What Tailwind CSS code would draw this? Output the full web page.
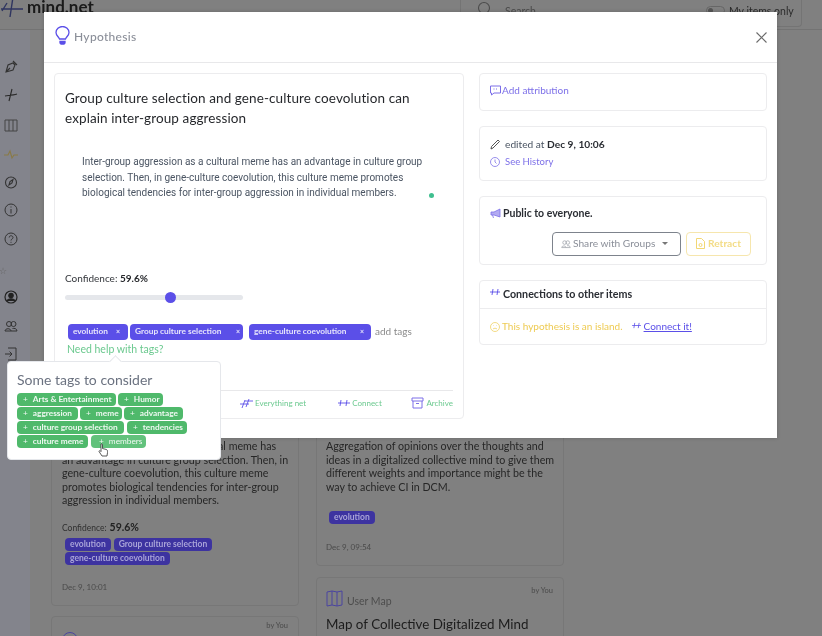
<!DOCTYPE html>
<html><head><meta charset="utf-8"><script src="https://cdn.jsdelivr.net/npm/@tailwindcss/browser@4"></script></head>
<body class="m-0">
<div class="relative w-[822px] h-[636px] overflow-hidden bg-[#808080] font-['Lato',sans-serif] text-[#1f2937] blur-[0.4px]">
  <!-- page behind -->
  <header class="h-[30px] border-b border-[#737373] flex items-start relative">
    <svg class="ml-[1px] mt-[-3px] shrink-0" width="24" height="24" viewBox="0 0 24 24" fill="none" stroke="#2f3560" stroke-width="1.4"><path d="M1 14 L6 6M0 12h22M12 0 L9 20"/></svg>
    <div class="ml-[2px] mt-[-2px] w-[64px] shrink-0 relative text-[17px] font-bold leading-[17px] text-[#1a1a1a] whitespace-nowrap">mind.net</div>
    <div class="ml-[369px] w-[342px] h-[27px] mt-0 border-r border-b border-l border-[#747474] rounded-b flex items-start pl-[16px] pt-[1px]">
      <svg class="shrink-0" width="14" height="14" viewBox="0 0 14 14" fill="none" stroke="#4b4b4b" stroke-width="1.1"><circle cx="7" cy="7" r="5.500"/></svg>
      <span class="ml-[14px] mt-[3px] text-[10.5px] text-[#4a4a4a]">Search</span>
      <span class="ml-[170px] mt-[5px] w-[19px] h-[9px] rounded-full border border-[#666] flex items-center pl-[1px]"><span class="w-[5px] h-[5px] bg-[#555] rounded-full"></span></span>
      <span class="ml-[4px] mt-[3px] text-[10.5px] whitespace-nowrap text-[#2a2a2a]">My items only</span>
    </div>
  </header>
  <div class="flex h-[606px]">
    <aside class="w-[30px] shrink-0 bg-[#83848c] relative flex flex-col items-center">
      <svg class="absolute left-[4px] top-[30px]" width="14" height="14" viewBox="0 0 14 14" fill="none" stroke="#333" stroke-width="1.1"><path d="M2 12l2-7 5-2 2 2-2 5zM2 12l4-4M9 1l4 4"/></svg>
      <svg class="absolute left-[4px] top-[58px]" width="14" height="14" viewBox="0 0 14 14" fill="none" stroke="#2a2a2a" stroke-width="1.1"><path d="M1 8c4-.5 9-1 12-2M8 1 5 13"/></svg>
      <svg class="absolute left-[4px] top-[88px]" width="14" height="14" viewBox="0 0 14 14" fill="none" stroke="#444" stroke-width="1"><path d="M1 2h12v11H1zM5 2v11M9 2v11"/></svg>
      <svg class="absolute left-[4px] top-[118px]" width="14" height="14" viewBox="0 0 14 14" fill="none" stroke="#8a7a45" stroke-width="1.1"><path d="M0 7h4l2-4 2 7 2-3h4"/></svg>
      <svg class="absolute left-[4px] top-[145px]" width="14" height="14" viewBox="0 0 14 14" fill="none" stroke="#333" stroke-width="1.1"><circle cx="7" cy="7.5" r="5.5"/><path d="M5 10l1-3.500 3-2-1 3.500z"/></svg>
      <svg class="absolute left-[4px] top-[173px]" width="14" height="14" viewBox="0 0 14 14" fill="none" stroke="#333" stroke-width="1"><circle cx="7" cy="7" r="6"/><path d="M7 6v4.500M7 3.500v1"/></svg>
      <svg class="absolute left-[4px] top-[202px]" width="14" height="14" viewBox="0 0 14 14" fill="none" stroke="#333" stroke-width="1"><circle cx="7" cy="7" r="6"/><path d="M5.200 5.500c0-2.500 3.800-2.200 3.800 0 0 1.500-2 1.500-2 3M7 9.800v1"/></svg>
      <span class="absolute left-[-1px] top-[236px] text-[9px] leading-[9px] text-[#666]">☆</span>
      <svg class="absolute left-[4px] top-[260px]" width="14" height="14" viewBox="0 0 14 14" fill="none" stroke="#222" stroke-width="1.2"><circle cx="7" cy="7" r="6"/><circle cx="7" cy="5.500" r="2.200" fill="#222"/><path d="M3 11c1-3 7-3 8 0" fill="#222"/></svg>
      <svg class="absolute left-[4px] top-[289px]" width="14" height="14" viewBox="0 0 14 14" fill="none" stroke="#333" stroke-width="1"><circle cx="5" cy="5" r="2.500"/><circle cx="9.500" cy="5" r="2.500"/><path d="M1 12c0-3 6-3 6 0zM7 12h6c0-2.500-3-3-4.500-2.500"/></svg>
      <svg class="absolute left-[4px] top-[317px]" width="14" height="14" viewBox="0 0 14 14" fill="none" stroke="#333" stroke-width="1"><path d="M4 1h8v12H4M1 7h7M5.500 4.500 8 7l-2.500 2.500"/></svg>
    </aside>
    <main class="flex-1 flex gap-[17px] pl-[21px] items-start">
      <div class="w-[248px] shrink-0 flex flex-col gap-[10px] pt-[340px]">
        <article class="h-[236px] border border-[#777] rounded bg-[#808080] pl-[10px] pr-[8px] pt-[68px] flex flex-col">
          <p class="text-[10.7px] leading-[13.5px] text-[#262626]">Inter-group aggression as a cultural meme has<br>an advantage in culture group selection. Then, in<br>gene-culture coevolution, this culture meme<br>promotes biological tendencies for inter-group<br>aggression in individual members.</p>
          <div class="mt-[13px] flex items-baseline gap-[3px] text-[8.5px] text-[#303030]">Confidence: <b class="text-[10.5px] text-[#222]">59.6%</b></div>
          <div class="mt-[3px] flex flex-wrap gap-x-[3px] gap-y-[1px] pl-[3px]">
            <span class="h-[13px] px-[5px] rounded-sm bg-[#3d33a0] text-[#a9a4d8] text-[8.5px] leading-[13px] font-bold">evolution</span>
            <span class="h-[13px] px-[5px] rounded-sm bg-[#3d33a0] text-[#a9a4d8] text-[8.5px] leading-[13px] font-bold">Group culture selection</span>
            <span class="h-[13px] px-[5px] rounded-sm bg-[#3d33a0] text-[#a9a4d8] text-[8.5px] leading-[13px] font-bold">gene-culture coevolution</span>
          </div>
          <div class="mt-[16px] text-[8px] text-[#4a4a4a]">Dec 9, 10:01</div>
        </article>
        <article class="h-[40px] border border-[#777] rounded relative">
          <span class="absolute right-[10px] top-[3px] text-[7.5px] text-[#4a4a4a]">by You</span>
          <span class="absolute left-[10px] top-[15px] w-[16px] h-[16px] rounded-full border border-[#4a44a0]"></span>
        </article>
      </div>
      <div class="w-[248px] shrink-0 flex flex-col gap-[11px] pt-[340px]">
        <article class="h-[196px] border border-[#777] rounded pl-[9px] pr-[8px] pt-[68px] flex flex-col">
          <p class="text-[10.7px] leading-[13.5px] text-[#262626]">Aggregation of opinions over the thoughts and<br>ideas in a digitalized collective mind to give them<br>different weights and importance might be the<br>way to achieve CI in DCM.</p>
          <span class="mt-[18px] ml-[3px] self-start h-[13px] px-[5px] rounded-sm bg-[#3d33a0] text-[#a9a4d8] text-[8.5px] leading-[13px] font-bold">evolution</span>
          <div class="mt-[17px] text-[8px] text-[#4a4a4a]">Dec 9, 09:54</div>
        </article>
        <article class="h-[80px] border border-[#777] rounded relative px-[9px] pt-[12px]">
          <span class="absolute right-[10px] top-[7px] text-[7.5px] text-[#4a4a4a]">by You</span>
          <div class="flex items-end gap-[4px]">
            <svg width="17" height="17" viewBox="0 0 17 17" fill="none" stroke="#4a44a0" stroke-width="1"><path d="M1 2l5-1 5 1 5-1v14l-5 1-5-1-5 1zM6 1v14M11 2v14"/></svg>
            <span class="text-[10.5px] leading-[12px] text-[#4d4d4d]">User Map</span>
          </div>
          <h3 class="mt-[8px] text-[13.4px] leading-[18px] text-[#1c1c1c] whitespace-nowrap">Map of Collective Digitalized Mind</h3>
        </article>
      </div>
    </main>
  </div>

  <!-- modal -->
  <section class="absolute left-[44px] top-[12px] w-[733px] h-[426px] bg-white shadow-[0_0_4px_rgba(0,0,0,.2)] flex flex-col">
    <div class="h-[51px] shrink-0 border-b border-[#e8e8ea] flex items-center pl-[11px] pr-[9px]">
      <svg width="15" height="19" viewBox="0 0 15 19" fill="none" stroke="#5b4fe8" stroke-width="1.3" class="mt-[-4px]"><path d="M4.500 13C3.500 10.500 1 9.500 1 6.500a6.500 6 0 0 1 13 0C14 9.500 11.500 10.500 10.500 13z"/><path d="M5 15.500h5v1.500l-1 1H6l-1-1z" fill="#5b4fe8"/></svg>
      <span class="ml-[4px] text-[12px] font-medium tracking-[0.3px] text-[#8b8f99]">Hypothesis</span>
      <svg class="ml-auto" width="13" height="13" viewBox="0 0 13 13" fill="none" stroke="#6b6b6b" stroke-width="1.1"><path d="M1.500 1.500l10 10M11.500 1.500l-10 10"/></svg>
    </div>
    <div class="flex items-start gap-[15px] pl-[10px] pt-[10px]">
      <!-- left card -->
      <div class="w-[410px] h-[346px] border border-[#ececee] rounded-sm relative pl-[10px] pr-[10px] pt-[15px] flex flex-col">
        <h2 class="text-[13.5px] leading-[19.5px] tracking-[0.1px] text-[#26282c] w-[370px]">Group culture selection and gene-culture coevolution can explain inter-group aggression</h2>
        <p class="mt-[26px] ml-[17px] w-[345px] font-['Roboto',sans-serif] text-[10px] leading-[15.5px] text-[#4b5563]">Inter-group aggression as a cultural meme has an advantage in culture group<br>selection. Then, in gene-culture coevolution, this culture meme promotes<br>biological tendencies for inter-group aggression in individual members.</p>
        <span class="absolute left-[374px] top-[119px] w-[5px] h-[5px] rounded-full bg-[#3fbf8f]"></span>
        <div class="mt-[71px] text-[10px] leading-[12px] text-[#33363b]">Confidence: <b class="text-[#26282c]">59.6%</b></div>
        <div class="mt-[11px] w-[178px] h-[5px] rounded-full bg-[#e5e7eb] relative"><span class="absolute left-[100px] top-[-3px] w-[11px] h-[11px] rounded-full bg-[#5b4fe8]"></span></div>
        <div class="mt-[24px] ml-[3px] flex items-center gap-[2px] whitespace-nowrap">
          <span class="w-[60px] h-[16px] rounded-sm bg-[#5b4fe8] text-white/85 text-[8.3px] font-bold flex items-center justify-between pl-[5px] pr-[8px]">evolution<span class="text-[7px]">×</span></span>
          <span class="w-[113px] h-[16px] rounded-sm bg-[#5b4fe8] text-white/85 text-[8.3px] font-bold flex items-center justify-between pl-[5px] pr-[3px] mr-[4px]">Group culture selection<span class="text-[7px]">×</span></span>
          <span class="w-[122px] h-[16px] rounded-sm bg-[#5b4fe8] text-white/85 text-[8.300px] font-bold flex items-center justify-between pl-[5px] pr-[7px]">gene-culture coevolution<span class="text-[7px]">×</span></span>
          <span class="ml-[2px] text-[10px] text-[#8b8b8b]">add tags</span>
        </div>
        <a class="mt-[3px] ml-[2px] text-[10.5px] leading-[13px] text-[#6bc98f]">Need help with tags?</a>
        <div class="absolute left-[160px] right-[10px] top-[316px] border-t border-[#e8e8ea] pt-[6px] flex text-[8px] text-[#6bc98f]">
          <span class="ml-[25px] flex items-end gap-[2px]"><svg width="13" height="12" viewBox="0 0 13 12" fill="none" stroke="#5b4fe8" stroke-width=".9"><path d="M0 7h9M2 11l3-8M6 10l3-8M5 4h8"/></svg>Everything net</span>
          <span class="ml-[32px] flex items-end gap-[2px]"><svg width="12" height="12" viewBox="0 0 12 12" fill="none" stroke="#5b4fe8" stroke-width=".9"><path d="M0 6h12M3 3 2 9M9 3 8 9"/></svg>Connect</span>
          <span class="ml-auto flex items-end gap-[2px]"><svg width="13" height="12" viewBox="0 0 13 12" fill="none" stroke="#7c6fe8" stroke-width="1"><path d="M1 1h11v3H1zM2 4v7h9V4M5 6.500h3"/></svg>Archive</span>
        </div>
      </div>
      <!-- right column -->
      <div class="w-[288px] flex flex-col text-[10.2px]">
        <div class="h-[38px] border border-[#ececee] rounded-sm pl-[10px] pt-[7px] flex items-center self-stretch">
          <div class="flex items-center gap-[1px] mt-[-10px] text-[#7c6fe8] text-[10px]"><svg width="11" height="11" viewBox="0 0 11 11" fill="none" stroke="#7c6fe8"><path d="M.5 1h10v7H4L1.500 10V8H.5zM3.500 4h1M6 4h1"/></svg>Add attribution</div>
        </div>
        <div class="mt-[15px] h-[55px] border border-[#ececee] rounded-sm pl-[10px] pt-[10px]">
          <div class="flex items-center gap-[5px] text-[#4b5563]"><svg width="10" height="11" viewBox="0 0 10 11" fill="none" stroke="#444" stroke-width=".9"><path d="M1 10l.500-2.500L8 1l1.500 1.500L3 9z"/></svg><span>edited at <b class="text-[#2a2d33]">Dec 9, 10:06</b></span></div>
          <div class="mt-[3px] flex items-center gap-[5px] text-[#7c6fe8] text-[9.5px]"><svg width="10" height="10" viewBox="0 0 10 10" fill="none" stroke="#8d82ea" stroke-width=".9"><circle cx="5" cy="5" r="4.500"/><path d="M5 2.500V5l1.500 1.500"/></svg>See History</div>
        </div>
        <div class="mt-[15px] h-[69px] border border-[#ececee] rounded-sm pl-[10px] pr-[15px] pt-[9px]">
          <div class="flex items-center gap-[2px] font-bold text-[10.5px] text-[#2a2d33]"><svg width="11" height="11" viewBox="0 0 11 11" fill="#b3abf2" stroke="#7c6fe8" stroke-width=".8"><path d="M1 4h3l6-3v8L4 7H1zM2.500 7l1 3"/></svg>Public to everyone.</div>
          <div class="mt-[10px] flex justify-end gap-[5px]">
            <span class="w-[129px] h-[24px] border border-[#7d838c] rounded-sm flex items-center pl-[8px] text-[#8b8f99]"><svg class="mr-[2px]" width="10" height="10" viewBox="0 0 14 14" fill="none" stroke="#9a9ea6"><circle cx="5" cy="5" r="2.500"/><circle cx="9.500" cy="5" r="2.500"/><path d="M1 12c0-3 6-3 6 0zM7 12h6c0-2.500-3-3-4.500-2.500"/></svg>Share with Groups<span class="ml-[7px] w-0 h-0 border-x-[3px] border-x-transparent border-t-[3px] border-t-[#777]"></span></span>
            <span class="w-[65px] h-[24px] border border-[#f6e6ad] rounded-sm flex items-center justify-center gap-[3px] font-bold text-[#f3dc85]"><svg width="9" height="11" viewBox="0 0 9 11" fill="none" stroke="#f0d264" stroke-width=".9"><path d="M.5.500h5l3 3v7h-8z"/><circle cx="4.500" cy="7" r="1.500"/></svg>Retract</span>
          </div>
        </div>
        <div class="mt-[15px] h-[65px] border border-[#ececee] rounded-sm">
          <div class="h-[28px] border-b border-[#ececee] pl-[10px] flex items-center gap-[3px] font-bold text-[10.7px] text-[#2a2d33]"><svg class="mt-[-5px]" width="10" height="8" viewBox="0 0 10 8" fill="none" stroke="#5b4fe8" stroke-width=".9"><path d="M0 4h10M3 1 2 7M8 1 7 7"/></svg>Connections to other items</div>
          <div class="pl-[10px] pt-[10px] flex items-center text-[#eecb52] text-[10px]"><svg class="mr-[2px]" width="10" height="10" viewBox="0 0 10 10" fill="none" stroke="#f0d264" stroke-width=".8"><circle cx="5" cy="5" r="4.500"/><path d="M3 7c1-1 3-1 4 0M3.500 3.500v.5M6.500 3.500v.5"/></svg>This hypothesis is an island.<svg class="ml-[9px] mt-[-3px]" width="9" height="7" viewBox="0 0 10 8" fill="none" stroke="#5b4fe8" stroke-width=".9"><path d="M0 4h10M3 1 2 7M8 1 7 7"/></svg><a class="ml-[3px] text-[#5b4fe8] underline">Connect it!</a></div>
        </div>
      </div>
    </div>
  </section>

  <!-- tag popover -->
  <div class="absolute left-[7px] top-[361px] w-[214px] h-[99px] bg-white rounded-sm border border-[#e5e7eb] pl-[9px] pt-[9px]">
    <span class="absolute left-[103px] top-[-5px] w-[9px] h-[9px] rotate-45 bg-white border-l border-t border-[#e5e7eb]"></span>
    <div class="text-[14px] leading-[17px] text-[#6b7280]">Some tags to consider</div>
    <div class="mt-[5px] flex flex-col gap-[1px] text-[8.3px] font-bold text-white/90">
      <div class="flex gap-[2px]"><span class="w-[99px] h-[13px] rounded-sm bg-[#4fb96b] pl-[6px] flex items-center gap-[5px]"><i class="not-italic font-normal">+</i>Arts &amp; Entertainment</span><span class="w-[45px] h-[13px] rounded-sm bg-[#4fb96b] pl-[6px] flex items-center gap-[5px]"><i class="not-italic font-normal">+</i>Humor</span></div>
      <div class="flex gap-[2px]"><span class="w-[61px] h-[13px] rounded-sm bg-[#4fb96b] pl-[6px] flex items-center gap-[5px]"><i class="not-italic font-normal">+</i>aggression</span><span class="w-[42px] h-[13px] rounded-sm bg-[#4fb96b] pl-[6px] flex items-center gap-[5px]"><i class="not-italic font-normal">+</i>meme</span><span class="w-[59px] h-[13px] rounded-sm bg-[#4fb96b] pl-[6px] flex items-center gap-[5px]"><i class="not-italic font-normal">+</i>advantage</span></div>
      <div class="flex gap-[3px]"><span class="w-[107px] h-[13px] rounded-sm bg-[#4fb96b] pl-[6px] flex items-center gap-[5px]"><i class="not-italic font-normal">+</i>culture group selection</span><span class="w-[60px] h-[13px] rounded-sm bg-[#4fb96b] pl-[6px] flex items-center gap-[5px]"><i class="not-italic font-normal">+</i>tendencies</span></div>
      <div class="flex gap-[3px]"><span class="w-[71px] h-[13px] rounded-sm bg-[#4fb96b] pl-[6px] flex items-center gap-[5px]"><i class="not-italic font-normal">+</i>culture meme</span><span class="w-[55px] h-[13px] rounded-sm bg-[#62c27c] pl-[8px] flex items-center gap-[5px] font-normal">  <i class="not-italic">+</i>members</span></div>
    </div>
    <svg class="absolute left-[90px] top-[81px]" width="11" height="14" viewBox="0 0 11 14" fill="#fff" stroke="#333" stroke-width=".8"><path d="M3 1c1-.500 1.500 0 1.500 1v3.500l4 1c1 .5 1 1.500 1 3L9 13H4L1 8.500c0-1 1-1 1.500-.500l.5.500z"/></svg>
  </div>
</div>
</body></html>
